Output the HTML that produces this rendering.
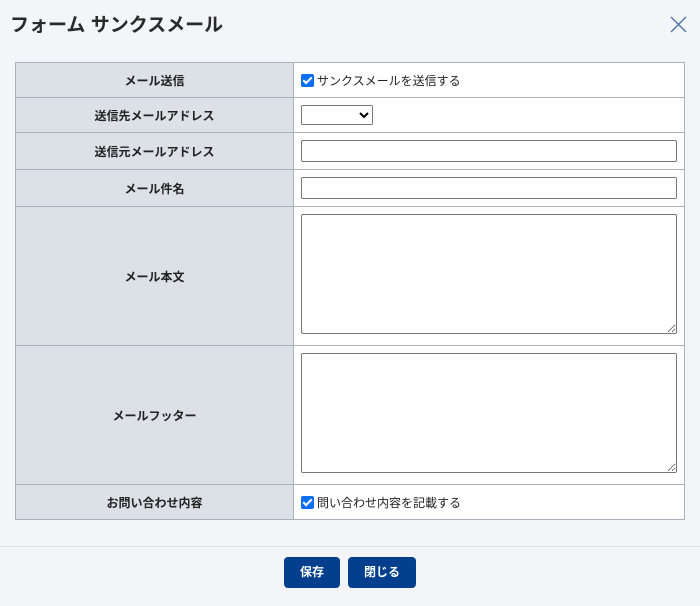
<!DOCTYPE html>
<html><head><meta charset="utf-8"><style>
*{box-sizing:border-box}
body{margin:0;width:700px;height:606px;background:#f4f5f9;font-family:"Liberation Sans","Noto Sans CJK JP",sans-serif;color:#222;position:relative;overflow:hidden}
.title{position:absolute;left:10px;top:10px;font-size:19px;font-weight:bold;color:#2a2a2a}
.close{position:absolute;left:670px;top:16px}
table{position:absolute;left:15px;top:62px;width:670px;border-collapse:collapse;font-size:12px}
td{border:1px solid #a8b1bc;padding:0}
td.l{background:#dce1e7;width:278px;text-align:center;font-weight:bold}
td.r{background:#fff;padding-left:7px}
input.t{width:376px;height:22px;border:1px solid #767676;border-radius:2px;display:block}
textarea{width:376px;height:120px;border:1px solid #767676;border-radius:2px;display:block;resize:both;position:relative;top:-2px}
.cb{display:inline-block;width:13px;height:13px;background:#0b6ef5;border-radius:2px;vertical-align:-2px;margin-right:3px;position:relative}
.cb:after{content:"";position:absolute;left:4px;top:1px;width:3px;height:7px;border:solid #fff;border-width:0 2px 2px 0;transform:rotate(45deg)}
select{width:72px;height:20px;border:1px solid #767676;border-radius:2px;background:#fff;display:block}
.hr{position:absolute;left:0;top:546px;width:700px;border-top:1px solid #dde1e6}
.btn{position:absolute;top:557px;height:31px;background:#033f8c;color:#fff;border-radius:4px;font-size:12px;font-weight:bold;text-align:center;line-height:31px}
</style></head><body>
<div class="title">フォーム サンクスメール</div>
<svg class="close" width="17" height="17" viewBox="0 0 17 17"><path d="M1 1L16 16M16 1L1 16" stroke="#4a6fa5" stroke-width="1.3"/></svg>
<table>
<tr style="height:35px"><td class="l">メール送信</td><td class="r"><span class="cb"></span>サンクスメールを送信する</td></tr>
<tr style="height:35px"><td class="l">送信先メールアドレス</td><td class="r"><select></select></td></tr>
<tr style="height:37px"><td class="l">送信元メールアドレス</td><td class="r"><input class="t"></td></tr>
<tr style="height:37px"><td class="l">メール件名</td><td class="r"><input class="t"></td></tr>
<tr style="height:139px"><td class="l">メール本文</td><td class="r"><textarea></textarea></td></tr>
<tr style="height:139px"><td class="l">メールフッター</td><td class="r"><textarea></textarea></td></tr>
<tr style="height:35px"><td class="l">お問い合わせ内容</td><td class="r"><span class="cb"></span>問い合わせ内容を記載する</td></tr>
</table>
<div class="hr"></div>
<div class="btn" style="left:284px;width:56px">保存</div>
<div class="btn" style="left:348px;width:68px">閉じる</div>
</body></html>
